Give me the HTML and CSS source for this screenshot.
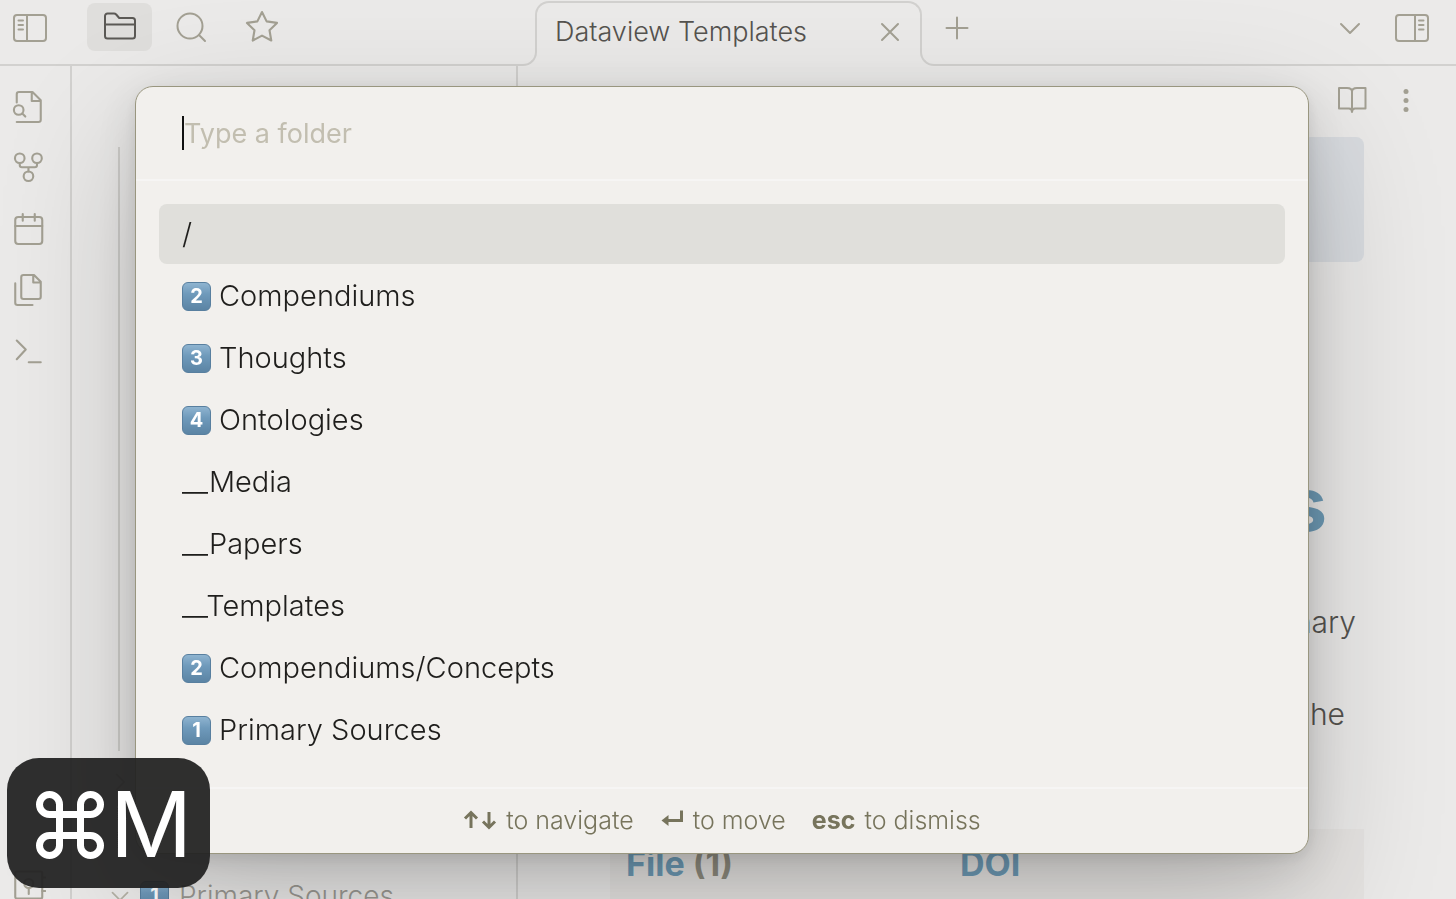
FILE: index.html
```html
<!DOCTYPE html>
<html lang="en">
<head>
  <meta charset="UTF-8" />
  <meta name="viewport" content="width=device-width, initial-scale=1.0" />
  <title>Dataview Templates</title>
  <link rel="stylesheet" href="styles.css">
</head>
<body>
  <div class="app">
    <header class="topbar">
      <div class="topbar-left">
        <button class="icon-btn toggle" aria-label="Toggle left sidebar">
          <svg viewBox="0 0 36 36"><rect x="2" y="6" width="32" height="26" rx="3"/><path d="M15 6v26M6.500 11.500h4.500M6.500 16h4.500M6.500 20.500h4.500"/></svg>
        </button>
        <button class="icon-btn tool active" aria-label="Files">
          <svg viewBox="0 0 36 36"><path d="M3 7a2.500 2.500 0 0 1 2.500-2.500h6.500c1 0 1.500.3 2.200 1l3 3.500h13.300a2.500 2.500 0 0 1 2.500 2.500v15.500a2.500 2.500 0 0 1-2.500 2.500H5.500A2.500 2.500 0 0 1 3 27zM3 15.500h30"/></svg>
        </button>
        <button class="icon-btn tool" aria-label="Search">
          <svg viewBox="0 0 36 36"><circle cx="17" cy="17" r="12.500"/><path d="M26 26l6 6"/></svg>
        </button>
        <button class="icon-btn tool" aria-label="Starred">
          <svg viewBox="0 0 24 24" class="thin"><path d="M12 2l3.090 6.260L22 9.270l-5 4.870 1.180 6.880L12 17.770l-6.180 3.250L7 14.140 2 9.270l6.910-1.010z"/></svg>
        </button>
      </div>
      <div class="tab">
        <span class="tab-title">Dataview Templates</span>
        <button class="icon-btn tab-close" aria-label="Close tab">
          <svg viewBox="0 0 24 24"><path d="M4 4l16 16M20 4L4 20"/></svg>
        </button>
      </div>
      <div class="topbar-right">
        <button class="icon-btn new-tab" aria-label="New tab">
          <svg viewBox="0 0 24 24"><path d="M12 1.500v21M1.500 12h21"/></svg>
        </button>
        <button class="icon-btn tab-list" aria-label="Tab list">
          <svg viewBox="0 0 24 24"><path d="M3 8l9 9 9-9"/></svg>
        </button>
        <button class="icon-btn" aria-label="Toggle right sidebar">
          <svg viewBox="0 0 36 36"><rect x="2" y="5" width="32" height="26" rx="3"/><path d="M21 5v26M25 10.500h4.500M25 15h4.500M25 19.500h4.500"/></svg>
        </button>
      </div>
    </header>

    <div class="workspace">
      <nav class="rail">
        <button class="icon-btn" aria-label="Quick switcher">
          <svg viewBox="0 0 24 24" class="thin"><path d="M4.500 9V3.500A1.500 1.500 0 0 1 6 2h9l5.500 5.500v13a1.500 1.500 0 0 1-1.500 1.500H4.500M14.500 2v6h6"/><circle cx="5.800" cy="14" r="3.200"/><path d="M8.200 16.400l2 2"/></svg>
        </button>
        <button class="icon-btn" aria-label="Graph view">
          <svg viewBox="0 0 24 24" class="thin"><circle cx="6.500" cy="5.500" r="3.200"/><circle cx="18" cy="5.500" r="3.200"/><circle cx="12.300" cy="17.500" r="3.200"/><path d="M6.500 8.700v1.300A1.500 1.500 0 0 0 8 11.500h8.500a1.500 1.500 0 0 0 1.500-1.500V8.700M12.300 11.500v2.800"/></svg>
        </button>
        <button class="icon-btn" aria-label="Daily note">
          <svg viewBox="0 0 24 24" class="thin"><rect x="3.500" y="4" width="18" height="18" rx="2"/><path d="M8.500 2v4.500M16.500 2v4.500M3.500 10h18"/></svg>
        </button>
        <button class="icon-btn" aria-label="Insert template">
          <svg viewBox="0 0 24 24" class="thin"><path d="M16 2H9a1.500 1.500 0 0 0-1.500 1.500v13A1.500 1.500 0 0 0 9 18h10a1.500 1.500 0 0 0 1.500-1.500v-10zM15.500 2v5h5M3.500 7.600V20.500A1.500 1.500 0 0 0 5 22h10"/></svg>
        </button>
        <button class="icon-btn" aria-label="Command palette">
          <svg viewBox="0 0 24 24" class="thin"><path d="M4.500 5l6 6-6 6.500M12.500 19.500h8"/></svg>
        </button>
        <button class="icon-btn vault" aria-label="Open another vault">
          <svg viewBox="0 0 24 24" class="thin"><rect x="3.500" y="3" width="18" height="18" rx="1"/><path d="M21.500 7h2M21.500 16h2M12.500 14v4"/><circle cx="12.500" cy="11" r="3"/></svg>
        </button>
      </nav>

      <aside class="sidebar">
        <div class="tree-guide"></div>
        <div class="tree-row collapsed">
          <svg class="chevron" viewBox="0 0 24 24"><path d="M8 3l9 9-9 9"/></svg>
        </div>
        <div class="tree-row">
          <svg class="chevron" viewBox="0 0 24 24"><path d="M3 8l9 9 9-9"/></svg>
          <span class="keycap">1</span>
          <span>Primary Sources</span>
        </div>
      </aside>

      <main class="note">
        <div class="note-actions">
          <button class="icon-btn" aria-label="Reading view">
            <svg viewBox="0 0 36 36"><path d="M18 9.500C18 7 16 6 13 6H5v20.500H15c2 0 3 .8 3 3.500 0-2.700 1-3.500 3-3.500h10.500V6H23c-3 0-5 1-5 3.500zv20.500"/></svg>
          </button>
          <button class="icon-btn" aria-label="More options">
            <svg viewBox="0 0 36 36" class="dots"><circle cx="18" cy="9.500" r="2.500"/><circle cx="18" cy="18.500" r="2.500"/><circle cx="18" cy="27.500" r="2.500"/></svg>
          </button>
        </div>
        <div class="callout"></div>
        <h1>s</h1>
        <p class="line-one">nary</p>
        <p class="line-two">he</p>
        <table class="dataview">
          <thead>
            <tr><th>File <span class="count">(1)</span></th><th>DOI</th></tr>
          </thead>
        </table>
      </main>
    </div>
  </div>

  <div class="overlay">
    <div class="modal" role="dialog" aria-label="Move file to folder">
      <div class="prompt">
        <span class="caret"></span>
        <input class="prompt-input" type="text" placeholder="Type a folder" aria-label="Type a folder" />
      </div>
      <ul class="results" role="listbox" aria-label="Folders">
        <li class="selected" role="option" aria-selected="true">/</li>
        <li role="option"><span class="keycap">2</span>Compendiums</li>
        <li role="option"><span class="keycap">3</span>Thoughts</li>
        <li role="option"><span class="keycap">4</span>Ontologies</li>
        <li role="option">__Media</li>
        <li role="option">__Papers</li>
        <li role="option">__Templates</li>
        <li role="option"><span class="keycap">2</span>Compendiums/Concepts</li>
        <li role="option"><span class="keycap">1</span>Primary Sources</li>
      </ul>
      <div class="hints">
        <span class="hint">
          <svg class="hint-icon wide" viewBox="0 0 34 24"><path d="M8 20V5M2 10.500L8 4.500l6 6M26 4v15M20 13.500l6 6 6-6"/></svg>
          to navigate
        </span>
        <span class="hint">
          <svg class="hint-icon" viewBox="0 0 24 24"><path d="M21.500 2.500v10H4"/><path class="solid" d="M1.500 12.500l7-5.500v11z"/></svg>
          to move
        </span>
        <span class="hint"><b>esc</b> to dismiss</span>
      </div>
    </div>
  </div>

  <div class="keystroke">
    <svg viewBox="0 0 68 68"><path d="M23.500 23.500V13.500a10 10 0 1 0-10 10h41a10 10 0 1 0-10-10v41a10 10 0 1 0 10-10h-41a10 10 0 1 0 10 10z"/></svg>
    <span>M</span>
  </div>
</body>
</html>
```
FILE: styles.css
```css
*,
*::before,
*::after {
  box-sizing: border-box;
}
body {
  margin: 0;
  height: 100vh;
  overflow: hidden;
  font-family: Inter, "Liberation Sans", sans-serif;
  font-weight: 300;
  color: #55534f;
  background-color: #ebeae9;
}
button {
  border: none;
  background: none;
  padding: 0;
  font: inherit;
  cursor: pointer;
}
svg {
  display: block;
  fill: none;
  stroke: currentColor;
  stroke-width: 2;
  stroke-linecap: round;
  stroke-linejoin: round;
}
svg.thin {
  stroke-width: 1.4;
}
.app {
  height: 100%;
  display: flex;
  flex-direction: column;
}
.icon-btn {
  display: flex;
  align-items: center;
  justify-content: center;
  flex: none;
  color: #a3a093;
}
.icon-btn svg {
  width: 36px;
  height: 36px;
}

/* top bar */
.topbar {
  display: flex;
  flex: none;
  height: 66px;
}
.topbar-left,
.topbar-right {
  display: flex;
  border-bottom: 2px solid #d2d1cf;
}
.topbar-left {
  width: 523px;
  padding: 3px 0 13px 12px;
  gap: 6px;
}
.toggle {
  margin-right: 33px;
}
.tool {
  width: 65px;
  border-radius: 8px;
}
.tool.active {
  background-color: #dfdedc;
  color: #5b5955;
}
.tab {
  position: relative;
  display: flex;
  align-items: center;
  justify-content: space-between;
  width: 387px;
  margin: 1px 12px 14px;
  padding: 8px 18px 0;
  border: 2px solid #d2d1cf;
  border-bottom: none;
  border-radius: 14px 14px 0 0;
}
/* curved feet that join the tab to the bar's bottom line */
.tab::before,
.tab::after {
  content: "";
  position: absolute;
  bottom: -14px;
  width: 14px;
  height: 14px;
  border-bottom: 2px solid #d2d1cf;
}
.tab::before {
  left: -14px;
  border-right: 2px solid #d2d1cf;
  border-bottom-right-radius: 14px;
}
.tab::after {
  right: -14px;
  border-left: 2px solid #d2d1cf;
  border-bottom-left-radius: 14px;
}
.tab-title {
  font-size: 27px;
  line-height: 32px;
}
.tab-close svg,
.new-tab svg,
.tab-list svg {
  width: 24px;
  height: 24px;
}
.topbar-right {
  flex: 1;
  align-items: center;
  padding: 0 26px 8px 11px;
}
.tab-list {
  margin-left: auto;
  margin-right: 32px;
}

/* workspace behind the modal */
.workspace {
  display: flex;
  flex: 1;
  min-height: 0;
}
.rail {
  display: flex;
  flex-direction: column;
  align-items: flex-start;
  flex: none;
  gap: 25px;
  width: 72px;
  padding: 23px 10px 0;
  border-right: 2px solid #d2d1cf;
}
.rail .vault {
  margin-top: auto;
  margin-bottom: -4px;
}
.sidebar {
  display: flex;
  flex-direction: column;
  flex: none;
  width: 446px;
  padding: 81px 0 0 38px;
  border-right: 2px solid #d2d1cf;
}
.tree-guide {
  flex: 1;
  width: 2px;
  margin-left: 8px;
  background-color: #cfcecb;
}
.tree-row {
  display: flex;
  align-items: center;
  flex: none;
  gap: 10px;
  height: 61px;
  margin-bottom: -27px;
  font-size: 28px;
  white-space: nowrap;
  color: #9b9993;
}
.tree-row.collapsed {
  margin-bottom: 53px;
}
.chevron {
  width: 20px;
  height: 20px;
  color: #b5b2a6;
}
.note {
  flex: 1;
  min-width: 0;
  overflow: hidden;
  padding: 0 92px;
}
.note-actions {
  display: flex;
  justify-content: flex-end;
  gap: 18px;
  height: 71px;
  margin-right: -60px;
  padding-bottom: 3px;
}
.dots {
  fill: currentColor;
  stroke: none;
}
.callout {
  height: 125px;
  border-radius: 8px;
  background-color: #d9dce0;
}
h1 {
  margin: 202px 37px 55px 0;
  font-size: 74px;
  line-height: 80px;
  font-weight: 700;
  text-align: right;
  color: #6e9bb6;
}
p {
  margin: 0;
  font-size: 30px;
  line-height: 46px;
  text-align: right;
}
.line-one {
  padding-right: 8px;
}
.line-two {
  margin-top: 46px;
  padding-right: 19px;
}
.dataview {
  width: 100%;
  margin-top: 92px;
  border-collapse: collapse;
  table-layout: fixed;
  background-color: #e6e4e2;
}
.dataview th {
  height: 72px;
  padding: 0 16px 4px;
  font-size: 34px;
  font-weight: 700;
  text-align: left;
  color: #6e9bb6;
}
.dataview th:first-child {
  width: 334px;
}
.count {
  color: #8f8c7f;
}

/* folder picker */
.overlay {
  position: fixed;
  inset: 0;
  padding: 86px 147px 0 135px;
}
.modal {
  overflow: hidden;
  border: 1px solid #99967f;
  border-radius: 18px;
  background-color: #f2f0ed;
  box-shadow: 0 4px 14px rgba(0, 0, 0, 0.08), 0 12px 48px rgba(0, 0, 0, 0.12), 0 50px 140px rgba(0, 0, 0, 0.2);
}
.prompt {
  display: flex;
  align-items: center;
  height: 94px;
  padding: 0 46px;
  border-bottom: 2px solid #f6f5f4;
}
.caret {
  width: 2px;
  height: 34px;
  background-color: #111;
}
.prompt-input {
  flex: 1;
  padding: 0;
  border: none;
  outline: none;
  background: none;
  font: inherit;
  font-size: 27px;
  font-weight: 400;
}
.prompt-input::placeholder {
  color: #c2beb0;
  opacity: 1;
}
.results {
  display: flex;
  flex-direction: column;
  gap: 2px;
  margin: 0;
  padding: 23px 23px 27px;
  list-style: none;
  font-size: 29px;
  line-height: 60px;
  color: #1f1e1c;
}
.results li {
  display: flex;
  align-items: center;
  padding: 0 23px;
  border-radius: 8px;
}
.results .selected {
  background-color: #e0dfdb;
}
.keycap {
  flex: none;
  width: 29px;
  height: 29px;
  border: 1px solid #587f9f;
  border-radius: 6px;
  background: linear-gradient(#8fb4d0, #6f9abb 40%, #5b84a4);
  font-size: 20px;
  line-height: 27px;
  font-weight: 700;
  text-align: center;
  color: #fff;
}
.results .keycap {
  margin-right: 8px;
}
.hints {
  display: flex;
  align-items: center;
  justify-content: center;
  gap: 26px;
  height: 66px;
  padding-bottom: 2px;
  border-top: 2px solid #f6f5f4;
  font-size: 25px;
  color: #77745c;
}
.hint {
  display: flex;
  align-items: center;
  gap: 9px;
}
.hint b {
  font-weight: 700;
}
.hint-icon {
  width: 24px;
  height: 24px;
  stroke-width: 3;
  stroke-linecap: butt;
  stroke-linejoin: miter;
}
.hint-icon.wide {
  width: 34px;
}
.hint-icon .solid {
  fill: currentColor;
  stroke: none;
}

/* pressed keys badge */
.keystroke {
  position: fixed;
  left: 7px;
  bottom: 11px;
  display: flex;
  align-items: center;
  gap: 6px;
  height: 130px;
  padding: 3px 18px 0 29px;
  border-radius: 32px;
  background-color: rgba(34, 34, 34, 0.94);
  font-size: 91px;
  line-height: 127px;
  font-weight: 400;
  color: #fff;
}
.keystroke svg {
  width: 68px;
  height: 68px;
  stroke-width: 7;
}
```
